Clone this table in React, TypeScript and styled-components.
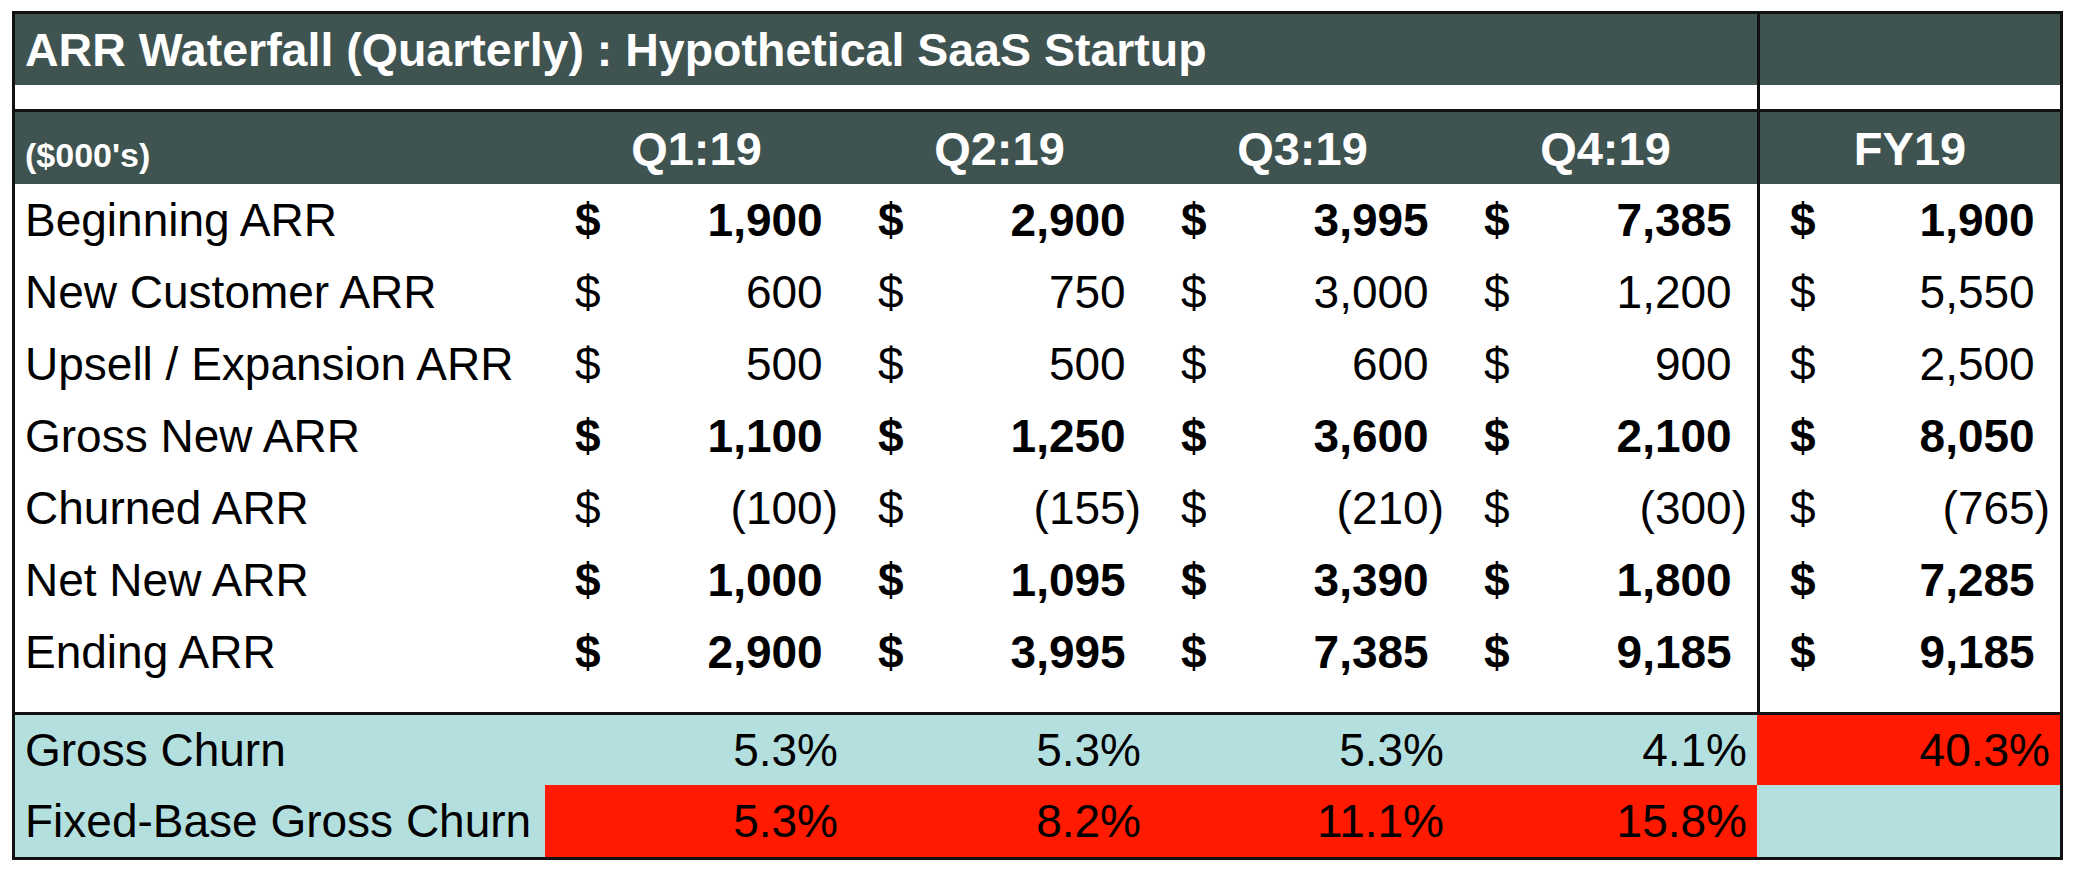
import React from 'react';
import styled, { createGlobalStyle, css } from 'styled-components';

const GlobalStyle = createGlobalStyle`
  html, body {
    margin: 0;
    padding: 0;
    background: #ffffff;
  }
  body {
    font-family: 'Liberation Sans', Arial, Helvetica, sans-serif;
    color: #000;
  }
`;

const COLS = '530px repeat(4, 303px) 303px';
const DARK = '#3f5351';
const TEAL = '#b3dfde';
const RED = '#ff1a00';

const Frame = styled.div`
  margin: 11px 0 0 12px;
  width: 2045px;
  border: 3px solid #111;
  background: #fff;
`;

const Row = styled.div<{ $height: number; $ruled?: boolean; $bg?: string }>`
  display: grid;
  grid-template-columns: ${COLS};
  height: ${p => p.$height}px;
  background: ${p => p.$bg || 'transparent'};
  ${p =>
    p.$ruled &&
    css`
      border-top: 3px solid #111;
    `}
`;

const TitleCell = styled.div`
  grid-column: 1 / span 5;
  display: flex;
  align-items: center;
  padding-left: 10px;
  color: #fff;
  font-weight: bold;
  font-size: 46.5px;
  white-space: nowrap;
`;

const FyCell = styled.div<{ $bg?: string; $divider?: boolean }>`
  grid-column: 6;
  background: ${p => p.$bg || 'transparent'};
  border-left: ${p => (p.$divider === false ? 'none' : '3px solid #111')};
  display: flex;
  align-items: center;
`;

const UnitLabel = styled.div`
  display: flex;
  align-items: center;
  padding: 14px 0 0 10px;
  color: #fff;
  font-weight: bold;
  font-size: 34px;
`;

const PeriodHead = styled.div`
  display: flex;
  align-items: center;
  justify-content: center;
  color: #fff;
  font-weight: bold;
  font-size: 47px;
  width: 100%;
`;

const Label = styled.div`
  display: flex;
  align-items: center;
  padding-left: 10px;
  font-size: 46px;
  white-space: nowrap;
`;

const Money = styled.div<{ $bold?: boolean }>`
  display: flex;
  align-items: center;
  justify-content: space-between;
  padding: 0 10px 0 30px;
  font-size: 46px;
  font-weight: ${p => (p.$bold ? 'bold' : 'normal')};
  width: 100%;
  box-sizing: border-box;
`;

const Pad = styled.span`
  visibility: hidden;
`;

const Pct = styled.div<{ $bg?: string }>`
  display: flex;
  align-items: center;
  justify-content: flex-end;
  padding-right: 10px;
  font-size: 46px;
  background: ${p => p.$bg || 'transparent'};
  width: 100%;
  box-sizing: border-box;
`;

type Line = { label: string; bold?: boolean; values: number[] };

const LINES: Line[] = [
  { label: 'Beginning ARR', bold: true, values: [1900, 2900, 3995, 7385, 1900] },
  { label: 'New Customer ARR', values: [600, 750, 3000, 1200, 5550] },
  { label: 'Upsell / Expansion ARR', values: [500, 500, 600, 900, 2500] },
  { label: 'Gross New ARR', bold: true, values: [1100, 1250, 3600, 2100, 8050] },
  { label: 'Churned ARR', values: [-100, -155, -210, -300, -765] },
  { label: 'Net New ARR', bold: true, values: [1000, 1095, 3390, 1800, 7285] },
  { label: 'Ending ARR', bold: true, values: [2900, 3995, 7385, 9185, 9185] },
];

const PERIODS = ['Q1:19', 'Q2:19', 'Q3:19', 'Q4:19'];

type Metric = { label: string; values: { text: string; hot?: boolean }[]; fy: { text: string; hot?: boolean } };

const METRICS: Metric[] = [
  {
    label: 'Gross Churn',
    values: [{ text: '5.3%' }, { text: '5.3%' }, { text: '5.3%' }, { text: '4.1%' }],
    fy: { text: '40.3%', hot: true },
  },
  {
    label: 'Fixed-Base Gross Churn',
    values: [
      { text: '5.3%', hot: true },
      { text: '8.2%', hot: true },
      { text: '11.1%', hot: true },
      { text: '15.8%', hot: true },
    ],
    fy: { text: '' },
  },
];

const fmt = (n: number) => {
  const s = Math.abs(n).toLocaleString('en-US');
  return n < 0 ? `(${s})` : s;
};

const MoneyCell = ({ value, bold }: { value: number; bold?: boolean }) => (
  <Money $bold={bold}>
    <span>$</span>
    <span>
      {fmt(value)}
      {value >= 0 && <Pad>)</Pad>}
    </span>
  </Money>
);

export default function App() {
  return (
    <>
      <GlobalStyle />
      <Frame>
        <Row $height={71} $bg={DARK}>
          <TitleCell>ARR Waterfall (Quarterly) : Hypothetical SaaS Startup</TitleCell>
          <FyCell />
        </Row>
        <Row $height={24}>
          <div style={{ gridColumn: '1 / span 5' }} />
          <FyCell />
        </Row>
        <Row $height={72} $ruled $bg={DARK}>
          <UnitLabel>($000's)</UnitLabel>
          {PERIODS.map(p => (
            <PeriodHead key={p}>{p}</PeriodHead>
          ))}
          <FyCell>
            <PeriodHead>FY19</PeriodHead>
          </FyCell>
        </Row>
        {LINES.map(line => (
          <Row key={line.label} $height={72}>
            <Label>{line.label}</Label>
            {line.values.slice(0, 4).map((v, i) => (
              <MoneyCell key={i} value={v} bold={line.bold} />
            ))}
            <FyCell>
              <MoneyCell value={line.values[4]} bold={line.bold} />
            </FyCell>
          </Row>
        ))}
        <Row $height={24}>
          <div style={{ gridColumn: '1 / span 5' }} />
          <FyCell />
        </Row>
        {METRICS.map((m, idx) => (
          <Row key={m.label} $height={idx === 0 ? 70 : 72} $ruled={idx === 0} $bg={TEAL}>
            <Label>{m.label}</Label>
            {m.values.map((v, i) => (
              <Pct key={i} $bg={v.hot ? RED : undefined}>
                {v.text}
              </Pct>
            ))}
            <FyCell $divider={false} $bg={m.fy.hot ? RED : undefined}>
              <Pct>{m.fy.text}</Pct>
            </FyCell>
          </Row>
        ))}
      </Frame>
    </>
  );
}
